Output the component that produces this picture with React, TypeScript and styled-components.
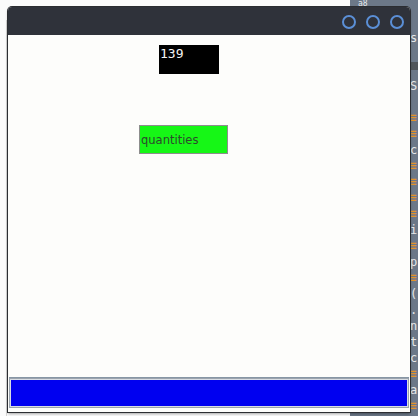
import * as React from 'react'
import styled, { createGlobalStyle } from 'styled-components'

type Line = { text: string; h?: number; hl?: boolean; tab?: boolean }

const editorLines: Line[] = [
  { text: 's' },
  { text: '' },
  { text: '', h: 8, hl: true },
  { text: '', h: 8 },
  { text: 'S' },
  { text: '' },
  { text: '≡', tab: true },
  { text: '≡', tab: true },
  { text: 'c' },
  { text: '≡', tab: true },
  { text: '≡', tab: true },
  { text: '≡', tab: true },
  { text: '≡', tab: true },
  { text: 'i' },
  { text: '≡', tab: true },
  { text: 'p' },
  { text: '≡', tab: true },
  { text: '(' },
  { text: '.' },
  { text: 'n' },
  { text: 't' },
  { text: 'c' },
  { text: '≡', tab: true },
  { text: 'a' },
  { text: '≡', tab: true },
]

const App: React.FC = () => {
  return (
    <Desktop>
      <GlobalStyle />
      <Backdrop>
        <LeftPane>
          <Gutter />
        </LeftPane>
        <Editor>
          <EditorTop>a8</EditorTop>
          {editorLines.map((line, i) => (
            <CodeLine key={i} h={line.h ?? 16} highlight={!!line.hl} tab={!!line.tab}>
              {line.text}
            </CodeLine>
          ))}
        </Editor>
      </Backdrop>

      <Window>
        <TitleBar>
          <WinButton />
          <WinButton />
          <WinButton />
        </TitleBar>
        <Content>
          <Counter>139</Counter>
          <Label>quantities</Label>
          <Spacer />
          <Footer>
            <BlueBar />
          </Footer>
        </Content>
      </Window>
    </Desktop>
  )
}

export default App

const GlobalStyle = createGlobalStyle`
  html, body {
    margin: 0;
    padding: 0;
    background: #fafafa;
  }
  body {
    font-family: "DejaVu Sans", sans-serif;
  }
`

const Desktop = styled.div`
  position: relative;
  width: 418px;
  height: 416px;
  overflow: hidden;
`
const Backdrop = styled.div`
  display: flex;
  height: 100%;
`
const LeftPane = styled.div`
  width: 350px;
  flex-shrink: 0;
  background: #fbfbfb;
  padding: 20px 0 0 6px;
  box-sizing: border-box;
`
const Gutter = styled.div`
  width: 1px;
  height: 100%;
  background: #d4d4d4;
`
const Editor = styled.div`
  flex: 1;
  min-width: 0;
  overflow: hidden;
  background: #6c7888;
  font-family: "DejaVu Sans Mono", monospace;
  color: #e6e8ea;
`
const EditorTop = styled.div`
  height: 30px;
  line-height: 8px;
  padding-left: 8px;
  font-size: 8px;
  box-sizing: border-box;
`
const CodeLine = styled.div<{ h: number; highlight: boolean; tab: boolean }>`
  height: ${({ h }) => h}px;
  line-height: ${({ h }) => h}px;
  padding-left: 60px;
  white-space: pre;
  background: ${({ highlight }) => (highlight ? '#50555a' : 'transparent')};
  color: ${({ tab }) => (tab ? '#e29428' : '#e6e8ea')};
  font-size: ${({ tab }) => (tab ? '11px' : '12px')};
  font-weight: ${({ tab }) => (tab ? 700 : 400)};
`
const Window = styled.div`
  position: absolute;
  left: 8px;
  top: 7px;
  width: 402px;
  height: 405px;
  display: flex;
  flex-direction: column;
  border-radius: 4px 4px 0 0;
  overflow: hidden;
  background: #fdfdfb;
  box-shadow: 0 0 0 1px #2b2d31, 0 2px 3px rgba(0, 0, 0, 0.35);
`
const TitleBar = styled.div`
  height: 28px;
  flex-shrink: 0;
  background: #2f323a;
  display: flex;
  align-items: center;
  justify-content: flex-end;
  gap: 10px;
  padding: 1px 6px 0 0;
  box-sizing: border-box;
`
const WinButton = styled.span`
  width: 14px;
  height: 14px;
  border-radius: 50%;
  border: 2px solid #5b8fd6;
  box-sizing: border-box;
`
const Content = styled.div`
  flex: 1;
  display: flex;
  flex-direction: column;
  align-items: flex-start;
  padding: 0 1px 5px 1px;
`
const Counter = styled.div`
  margin: 10px 0 0 150px;
  width: 60px;
  height: 29px;
  background: #000;
  color: #f4f4f4;
  font-family: "DejaVu Sans Mono", monospace;
  font-size: 13px;
  line-height: 15px;
  padding: 1px 0 0 1px;
  box-sizing: border-box;
`
const Label = styled.div`
  margin: 51px 0 0 130px;
  width: 89px;
  height: 29px;
  background: #16f716;
  border: 1px solid #8d8d8d;
  color: #2d4a2d;
  font-family: "DejaVu Sans", sans-serif;
  font-size: 11.5px;
  display: flex;
  align-items: center;
  padding-left: 1px;
  box-sizing: border-box;
`
const Spacer = styled.div`
  flex: 1;
`
const Footer = styled.div`
  align-self: stretch;
  border-top: 1px solid #8796a4;
  padding: 1px 1px 0 1px;
`
const BlueBar = styled.div`
  height: 28px;
  background: #0000f0;
  border: 1px solid #d8dde3;
  outline: 1px solid #9aa3ad;
  box-sizing: border-box;
`
